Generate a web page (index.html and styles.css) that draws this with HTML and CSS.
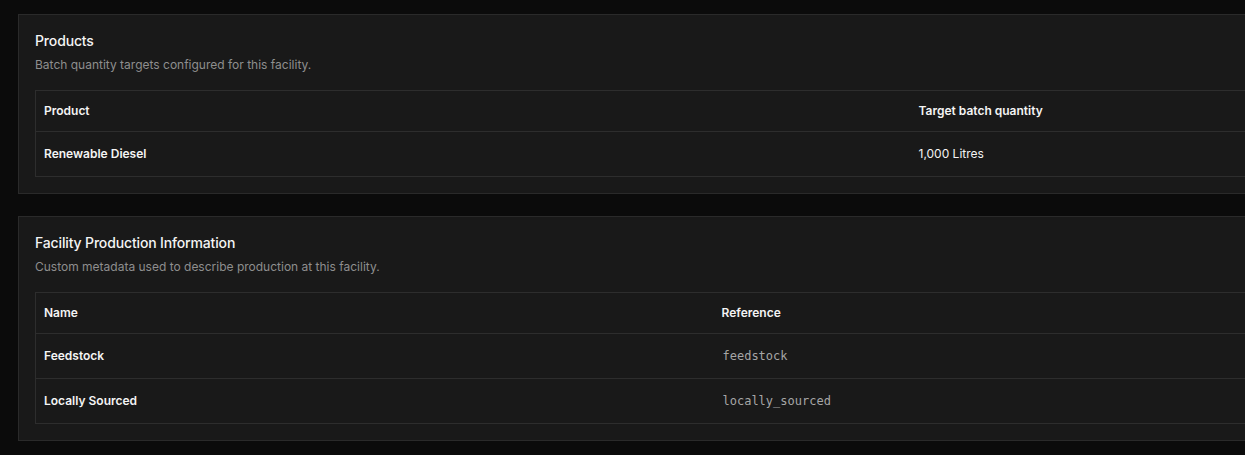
FILE: index.html
```html
<!DOCTYPE html>
<html lang="en">
<head>
<meta charset="utf-8">
<title>Facility</title>
<link rel="stylesheet" href="styles.css">
</head>
<body>
<main class="page">
  <section class="card">
    <h2 class="card-title">Products</h2>
    <p class="card-desc">Batch quantity targets configured for this facility.</p>
    <table class="data-table">
      <colgroup><col class="col-product"><col></colgroup>
      <thead>
        <tr><th>Product</th><th>Target batch quantity</th></tr>
      </thead>
      <tbody>
        <tr><td class="strong">Renewable Diesel</td><td>1,000 Litres</td></tr>
      </tbody>
    </table>
  </section>
  <section class="card">
    <h2 class="card-title">Facility Production Information</h2>
    <p class="card-desc">Custom metadata used to describe production at this facility.</p>
    <table class="data-table">
      <colgroup><col class="col-name"><col></colgroup>
      <thead>
        <tr><th>Name</th><th>Reference</th></tr>
      </thead>
      <tbody>
        <tr><td class="strong">Feedstock</td><td class="mono">feedstock</td></tr>
        <tr><td class="strong">Locally Sourced</td><td class="mono">locally_sourced</td></tr>
      </tbody>
    </table>
  </section>
</main>
</body>
</html>
```
FILE: styles.css
```css
html, body {
  margin: 0;
  padding: 0;
  background: #0b0b0b;
}
body {
  font-family: Inter, "Noto Sans", sans-serif;
  color: #f4f4f4;
}
.page {
  padding: 14px 0 0 18px;
  display: flex;
  flex-direction: column;
  gap: 22px;
}
.card {
  background: #191919;
  border: 1px solid #2a2a2a;
  border-right: none;
  padding: 16px 0 16px 16px;
}
.card-title {
  margin: 0;
  font-size: 14px;
  line-height: 20px;
  font-weight: 500;
  letter-spacing: -0.15px;
}
.card-desc {
  margin: 6px 0 17px;
  font-size: 12px;
  line-height: 16px;
  color: #8e8e8e;
}
.data-table {
  width: 100%;
  border-collapse: collapse;
  border: 1px solid #2d2d2d;
  border-right: none;
  table-layout: fixed;
  font-size: 12px;
}
.col-product { width: 875px; }
.col-name { width: 678px; }
.data-table th {
  text-align: left;
  font-weight: 600;
  height: 38px;
  padding: 0 8px 2px;
  border-bottom: 1px solid #2d2d2d;
}
.data-table td {
  height: 42px;
  padding: 0 8px 2px;
  border-bottom: 1px solid #2d2d2d;
  font-weight: 400;
}
.data-table td.strong { font-weight: 600; }
.data-table td.mono {
  font-family: "DejaVu Sans Mono", monospace;
  color: #a6a6a6;
  font-size: 12px;
  padding: 0 8px 0 9px;
}
```
